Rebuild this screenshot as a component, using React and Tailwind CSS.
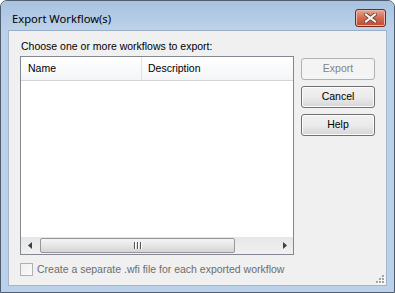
import React from "react";

function Btn({ children, disabled }) {
  return (
    <div
      className={
        "w-[74px] h-[22px] rounded-[3px] border flex items-center justify-center text-[10.5px] " +
        (disabled
          ? "border-[#adb2b5] bg-[#f4f4f4] text-[#838383]"
          : "border-[#707070] bg-gradient-to-b from-[#f2f2f2] via-[#ebebeb] to-[#d6d6d6] text-black shadow-[inset_0_0_0_1px_#fcfcfc]")
      }
    >
      {children}
    </div>
  );
}

export default function App() {
  return (
    <div
      className="w-[395px] h-[293px] rounded-t-[7px] border border-[#4f5f71] bg-[#bbd1e9] flex flex-col overflow-hidden"
      style={{ fontFamily: '"Liberation Sans", Arial, sans-serif' }}
    >
      {/* Title bar */}
      <div className="h-[29px] flex items-start justify-between pl-[11px] pr-[8px] bg-gradient-to-b from-[#a8c2df] to-[#bcd2ea]">
        <span
          className="mt-[10px] text-[11.2px] leading-[15px] text-black"
          style={{ fontFamily: '"Noto Sans", "Liberation Sans", sans-serif' }}
        >
          Export Workflow(s)
        </span>
        <div className="mt-[8px] w-[31px] h-[18px] rounded-[3px] border border-[#7a2717] bg-gradient-to-b from-[#e3a795] via-[#d06a52] to-[#c24a2c] shadow-[inset_0_0_0_1px_#efb9a8] flex items-center justify-center">
          <svg width="13" height="10" viewBox="0 0 13 10">
            <path
              d="M2 1.5 L11 8.5 M11 1.5 L2 8.5"
              stroke="#6a3a30"
              strokeWidth="3.8"
              strokeLinecap="square"
            />
            <path
              d="M2 1.5 L11 8.5 M11 1.5 L2 8.5"
              stroke="#f4f4f4"
              strokeWidth="2.2"
              strokeLinecap="square"
            />
          </svg>
        </div>
      </div>

      {/* Client area */}
      <div className="relative mx-[7px] mb-[6px] flex-1 bg-[#f0f0f0] border border-[#a3b6cc] border-t-[#9aaec6] flex flex-col pl-[11px] pt-[8px]">
        <div className="flex">
          <div className="flex flex-col w-[274px]">
            <div className="h-[15px] text-[10.5px] leading-[15px] text-black pl-[1px]">
              Choose one or more workflows to export:
            </div>
            <div className="mt-[2px] h-[199px] border border-[#828790] bg-white flex flex-col">
              {/* header */}
              <div className="h-[24px] flex bg-gradient-to-b from-[#ffffff] to-[#f4f5f7] border-b border-[#d5d5d5] text-[10.5px] text-black">
                <div className="w-[121px] pl-[7px] flex items-center border-r border-[#e2e3e5]">
                  Name
                </div>
                <div className="flex-1 pl-[6px] flex items-center">Description</div>
              </div>
              <div className="flex-1" />
              {/* scrollbar */}
              <div className="h-[17px] flex items-center bg-gradient-to-b from-[#e6e6e6] to-[#f1f1f1]">
                <div className="w-[17px] h-full flex items-center justify-center">
                  <svg width="4" height="7" viewBox="0 0 4 7">
                    <path d="M4 0 L0 3.5 L4 7 Z" fill="#404040" />
                  </svg>
                </div>
                <div className="w-[195px] h-[15px] ml-[2px] rounded-[2px] border border-[#979797] bg-gradient-to-b from-[#f3f3f3] via-[#e6e6e6] to-[#d4d4d4] flex items-center justify-center">
                  <svg width="8" height="7" viewBox="0 0 8 7">
                    <path d="M0.5 0 V7 M3.5 0 V7 M6.5 0 V7" stroke="#555" strokeWidth="1" />
                    <path d="M1.5 0 V7 M4.5 0 V7 M7.5 0 V7" stroke="#fff" strokeWidth="1" />
                  </svg>
                </div>
                <div className="flex-1" />
                <div className="w-[17px] h-full flex items-center justify-center">
                  <svg width="4" height="7" viewBox="0 0 4 7">
                    <path d="M0 0 L4 3.5 L0 7 Z" fill="#404040" />
                  </svg>
                </div>
              </div>
            </div>
          </div>
          <div className="ml-[7px] pt-[19px] flex flex-col gap-[6px]">
            <Btn disabled>Export</Btn>
            <Btn>Cancel</Btn>
            <Btn>Help</Btn>
          </div>
        </div>

        <div className="mt-[7px] flex items-center">
          <div className="w-[13px] h-[13px] border border-[#b1b1b1] bg-gradient-to-br from-[#f0f0f0] to-[#fafafa]" />
          <span className="ml-[4px] text-[10.5px] text-[#6d6d6d]">
            Create a separate .wfi file for each exported workflow
          </span>
        </div>

        {/* size grip */}
        <svg className="absolute right-[1px] bottom-[1px]" width="10" height="10" viewBox="0 0 10 10">
          {[
            [7, 1],
            [4, 4],
            [7, 4],
            [1, 7],
            [4, 7],
            [7, 7],
          ].map(([x, y], i) => (
            <g key={i}>
              <rect x={x + 1} y={y + 1} width="2" height="2" fill="#fff" />
              <rect x={x} y={y} width="2" height="2" fill="#a3a3a3" />
            </g>
          ))}
        </svg>
      </div>
    </div>
  );
}
